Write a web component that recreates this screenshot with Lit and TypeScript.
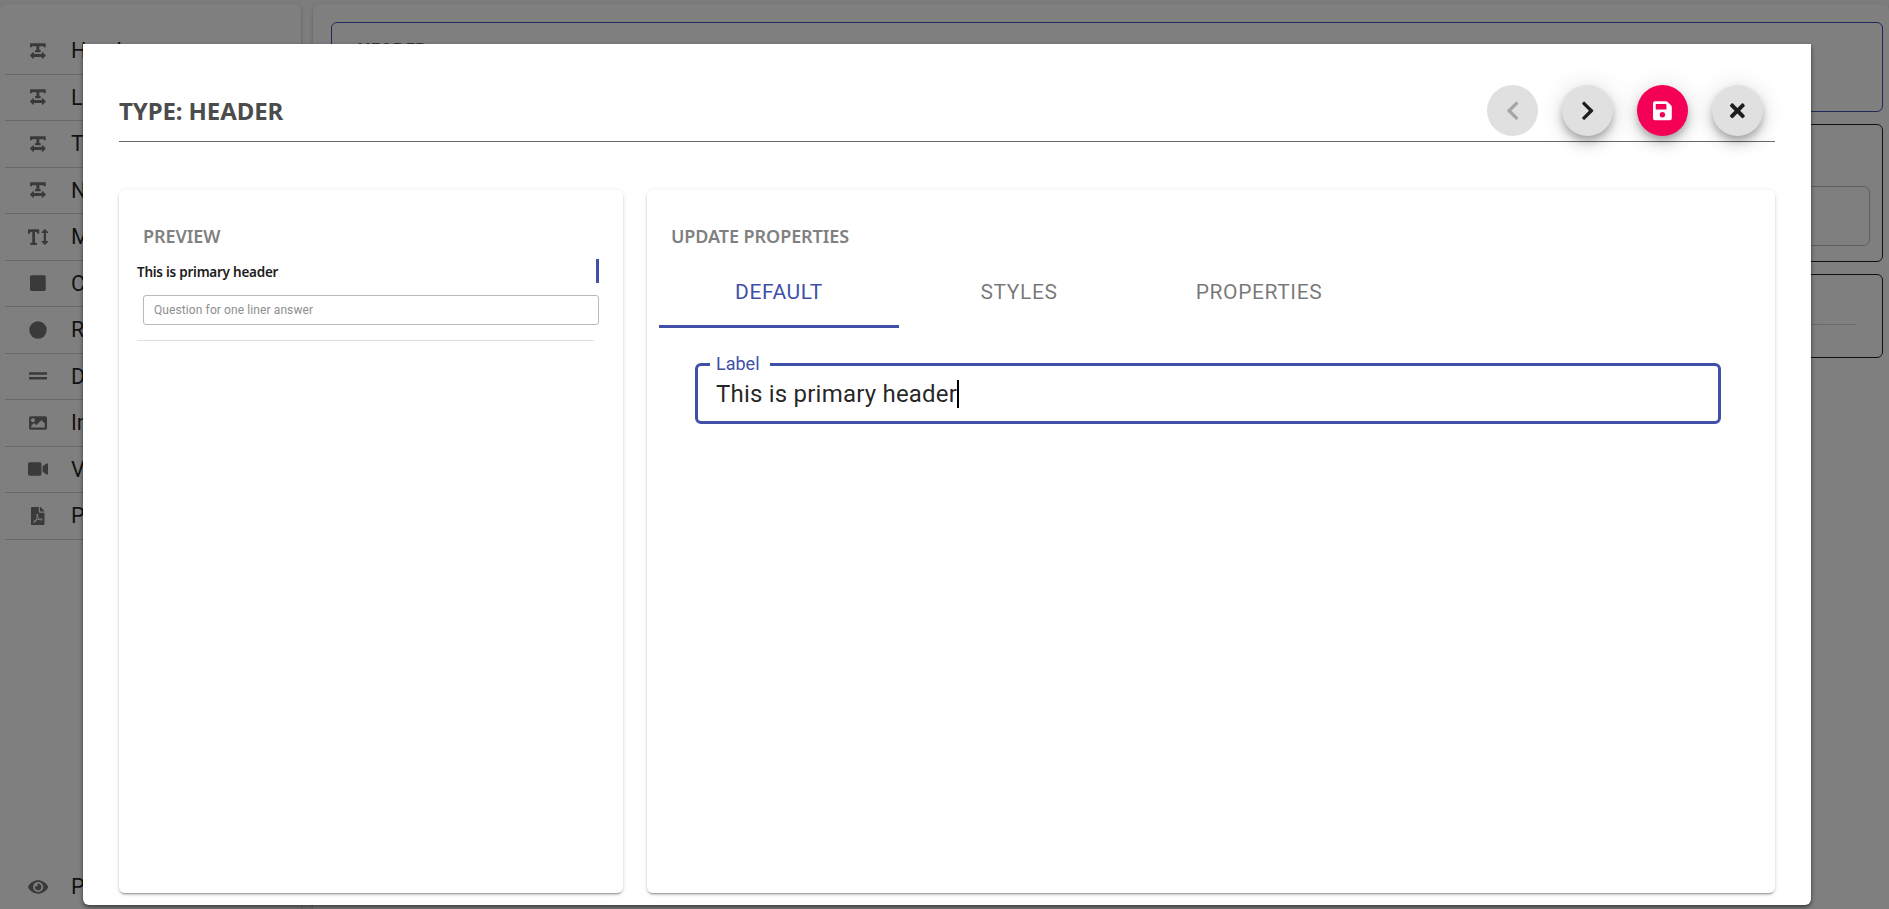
import { LitElement, html, css, svg } from "lit";
import { customElement } from "lit/decorators.js";

const icons: Record<string, unknown> = {
  textWidth: svg`<svg viewBox="0 0 448 512"><path d="M16 32h416a16 16 0 0 1 16 16v88a16 16 0 0 1-16 16h-28a16 16 0 0 1-16-16v-16H266v104h22a16 16 0 0 1 16 16v36a16 16 0 0 1-16 16H160a16 16 0 0 1-16-16v-36a16 16 0 0 1 16-16h22V120H60v16a16 16 0 0 1-16 16H16a16 16 0 0 1-16-16V48a16 16 0 0 1 16-16z"/><path d="M443 373l-80-80c-10-10-27-3-27 11v36H112v-36c0-16-18-20-27-11L5 373a16 16 0 0 0 0 22l80 80c10 10 27 3 27-11v-36h224v36c0 16 18 20 27 11l80-80a16 16 0 0 0 0-22z"/></svg>`,
  textHeight: svg`<svg viewBox="0 0 576 512"><path d="M304 32H16A16 16 0 0 0 0 48v96a16 16 0 0 0 16 16h32a16 16 0 0 0 16-16v-32h56v304H80a16 16 0 0 0-16 16v32a16 16 0 0 0 16 16h160a16 16 0 0 0 16-16v-32a16 16 0 0 0-16-16h-40V112h56v32a16 16 0 0 0 16 16h32a16 16 0 0 0 16-16V48a16 16 0 0 0-16-16zm256 336h-48V144h48c14 0 21-17 11-27l-80-80a16 16 0 0 0-22 0l-80 80c-10 10-3 27 11 27h48v224h-48c-14 0-21 17-11 27l80 80a16 16 0 0 0 22 0l80-80c10-10 3-27-11-27z"/></svg>`,
  square: svg`<svg viewBox="0 0 448 512"><path d="M400 32H48A48 48 0 0 0 0 80v352a48 48 0 0 0 48 48h352a48 48 0 0 0 48-48V80a48 48 0 0 0-48-48z"/></svg>`,
  circle: svg`<svg viewBox="0 0 512 512"><circle cx="256" cy="256" r="248"/></svg>`,
  lines: svg`<svg viewBox="0 0 18 18"><path d="M0 5.300h18v2.400H0zM0 10.100h18v2.400H0z"/></svg>`,
  image: svg`<svg viewBox="0 0 512 512"><path fill-rule="evenodd" d="M464 448H48a48 48 0 0 1-48-48V112a48 48 0 0 1 48-48h416a48 48 0 0 1 48 48v288a48 48 0 0 1-48 48zM112 120a56 56 0 1 0 0 112 56 56 0 0 0 0-112zM64 384h384V272l-87.500-87.500a12 12 0 0 0-17 0L208 320l-55.500-55.500a12 12 0 0 0-17 0L64 336z"/></svg>`,
  video: svg`<svg viewBox="0 0 576 512"><path d="M336 64H48A48 48 0 0 0 0 112v288a48 48 0 0 0 48 48h288a48 48 0 0 0 48-48V112a48 48 0 0 0-48-48zm190 38L416 178v156l110 76c21 14 50-1 50-26V128c0-25-29-40-50-26z"/></svg>`,
  pdf: svg`<svg viewBox="0 0 384 512"><path fill-rule="evenodd" d="M182 250c-5-16-5-47-2-47 9 0 8 41 2 47zm-2 47c-8 20-17 43-28 62 18-7 38-17 62-21-13-10-25-24-34-41zM86 428c0 1 13-5 35-40-7 6-29 25-35 40zM248 160h136v328a24 24 0 0 1-24 24H24a24 24 0 0 1-24-24V24A24 24 0 0 1 24 0h200v136a24 24 0 0 0 24 24zm-8 172c-20-12-33-29-43-54 5-18 12-46 7-64-5-29-42-26-47-7-5 18 0 44 8 77-12 27-28 64-40 85-23 12-54 30-59 53-4 18 30 63 88-37 26-9 55-19 80-23 22 12 47 20 64 20 30 0 33-33 21-44-14-14-54-10-79-6zM377 105L279 7a24 24 0 0 0-17-7h-6v128h128v-6a24 24 0 0 0-7-17zm-74 254c5-3-3-15-52-12 45 20 52 12 52 12z"/></svg>`,
  eye: svg`<svg viewBox="0 0 576 512"><path fill-rule="evenodd" d="M572 241C518 135 410 64 288 64S58 135 3 241a32 32 0 0 0 0 30c55 106 163 177 285 177s230-71 284-177a32 32 0 0 0 0-30zM288 400a144 144 0 1 1 0-288 144 144 0 0 1 0 288z"/><path d="M288 160a95 95 0 0 0-25 4 48 48 0 0 1-67 67 96 96 0 1 0 92-71z"/></svg>`,
  left: svg`<svg viewBox="0 0 320 512"><path d="M34 239L229 45c9-10 24-10 33 0l23 22c9 10 9 25 0 34L131 256l154 155c9 9 9 24 0 34l-23 22c-9 10-24 10-33 0L34 273a24 24 0 0 1 0-34z"/></svg>`,
  right: svg`<svg viewBox="0 0 320 512"><path d="M286 273L91 467c-9 10-24 10-33 0l-23-22c-9-10-9-25 0-34l154-155L35 101c-9-9-9-24 0-34l23-22c9-10 24-10 33 0l195 194a24 24 0 0 1 0 34z"/></svg>`,
  save: svg`<svg viewBox="0 0 448 512"><path fill-rule="evenodd" d="M434 130L350 46a48 48 0 0 0-34-14H48A48 48 0 0 0 0 80v352a48 48 0 0 0 48 48h352a48 48 0 0 0 48-48V164a48 48 0 0 0-14-34zM224 416a64 64 0 1 1 0-128 64 64 0 0 1 0 128zm96-305v101a12 12 0 0 1-12 12H76a12 12 0 0 1-12-12V108a12 12 0 0 1 12-12h228a12 12 0 0 1 9 4l3 3a12 12 0 0 1 4 8z"/></svg>`,
  close: svg`<svg viewBox="0 0 352 512"><path d="M243 256l100-100c12-12 12-32 0-44l-22-23c-12-12-32-12-45 0L176 189 76 89c-12-12-32-12-45 0L9 112c-12 12-12 32 0 44l100 100L9 356c-12 12-12 32 0 45l22 22c13 12 33 12 45 0l100-100 100 100c13 12 33 12 45 0l22-22c12-13 12-33 0-45z"/></svg>`,
};

const tools: [string, string][] = [
  ["textWidth", "Header"],
  ["textWidth", "Label"],
  ["textWidth", "Text"],
  ["textWidth", "Name"],
  ["textHeight", "Multi"],
  ["square", "Check"],
  ["circle", "Radio"],
  ["lines", "Divider"],
  ["image", "Image"],
  ["video", "Video"],
  ["pdf", "PDF"],
];

@customElement("app-root")
export class AppRoot extends LitElement {
  static styles = css`
    :host {
      display: block;
      position: relative;
      width: 100%;
      height: 909px;
      overflow: hidden;
      font-family: Roboto, "Liberation Sans", sans-serif;
      color: rgba(0, 0, 0, 0.87);
    }
    * { box-sizing: border-box; }
    svg { display: block; fill: currentColor; }
    .page {
      display: flex;
      gap: 12px;
      height: 100%;
      padding-top: 4px;
      background: #fafafa;
    }
    .sidebar, .canvas {
      background: #fff;
      border-radius: 6px 6px 0 0;
      box-shadow: 0 3px 2px -3px rgba(0,0,0,.2), 0 2px 3px rgba(0,0,0,.14), 0 1px 5px rgba(0,0,0,.12);
    }
    .sidebar {
      width: 301px;
      display: flex;
      flex-direction: column;
      justify-content: space-between;
      padding: 24px 5px 0;
    }
    .tool {
      display: flex;
      align-items: center;
      height: 46.5px;
      border-bottom: 1.5px solid rgba(0,0,0,.18);
      font-size: 21.6px;
    }
    .tool.last { border: 0; margin-bottom: -1px; }
    .glyph {
      width: 66px;
      display: flex;
      justify-content: center;
      color: rgba(0,0,0,.54);
    }
    .glyph svg { height: 18px; }
    .canvas { flex: 1; padding: 18px 6px 0 18px; }
    .block {
      border: 1px solid #222;
      border-radius: 6px;
      margin-bottom: 12px;
      padding: 14px 12px 0 25px;
      font: 700 18px/25px "Noto Sans", sans-serif;
      letter-spacing: -.3px;
      color: rgba(0,0,0,.6);
    }
    .first { height: 90px; border-color: #3f51b5; }
    .second { height: 138px; padding-top: 61px; }
    .third { height: 84px; padding: 49px 25px 0; }
    .box { height: 60px; border: 1px solid rgba(0,0,0,.25); border-radius: 6px; }
    .rule { height: 1px; background: rgba(0,0,0,.15); }
    .overlay {
      position: absolute;
      inset: 0;
      padding: 44px 78px 4px 83px;
      background: rgba(0,0,0,.5);
    }
    .dialog {
      height: 861px;
      padding: 41px 36px 12px;
      display: flex;
      flex-direction: column;
      background: #fff;
      border-radius: 0 0 6px 6px;
      box-shadow: 0 3px 5px rgba(0,0,0,.35), 0 1px 3px rgba(0,0,0,.3);
    }
    .head {
      display: flex;
      justify-content: space-between;
      height: 57px;
      padding-right: 12px;
      margin-bottom: 48px;
      border-bottom: 1px solid #686868;
    }
    .title {
      font: 700 24px/51px "Noto Sans", sans-serif;
      letter-spacing: -.1px;
      color: #4c4c4c;
    }
    .actions { display: flex; gap: 24px; }
    .fab {
      width: 51px;
      height: 51px;
      border: 0;
      padding: 0;
      border-radius: 50%;
      display: flex;
      align-items: center;
      justify-content: center;
      background: #e0e0e0;
      color: rgba(0,0,0,.87);
      box-shadow: 0 4.500px 7px -1px rgba(0,0,0,.22), 0 8px 14px rgba(0,0,0,.15), 0 1px 26px rgba(0,0,0,.12);
    }
    .fab svg { height: 21.500px; }
    .fab.off { box-shadow: none; color: rgba(0,0,0,.26); }
    .fab.pink { background: #f50057; color: #fff; }
    .panels { flex: 1; display: flex; gap: 24px; }
    .panel {
      border-radius: 6px;
      background: #fff;
      box-shadow: 0 3px 1px -2px rgba(0,0,0,.2), 0 2px 2px rgba(0,0,0,.14), 0 1px 5px rgba(0,0,0,.12);
    }
    .preview { width: 504px; padding: 33px 24px 0 18px; }
    .update { flex: 1; padding: 33px 54px 0 12px; }
    .subtitle {
      font: 600 18px/26px "Noto Sans", sans-serif;
      letter-spacing: -.08px;
      color: #808080;
      padding-left: 6px;
    }
    .update .subtitle { padding-left: 12px; }
    .line {
      display: flex;
      justify-content: space-between;
      height: 24px;
      margin-top: 10px;
      border-right: 3px solid #4050a8;
      font: 600 13.500px/27px "Noto Sans", sans-serif;
      letter-spacing: -.25px;
      color: #1c1c1c;
    }
    .answer {
      height: 30px;
      margin: 12px 0 15px 6px;
      padding-left: 10px;
      border: 1px solid #b9b9b9;
      border-radius: 3px;
      font-size: 12px;
      line-height: 28px;
      letter-spacing: .1px;
      color: #8e8e8e;
    }
    .preview .rule { margin-right: 5px; background: #e0e0e0; }
    .tabs { display: flex; margin-top: 7px; }
    .tab {
      width: 240px;
      height: 72px;
      padding-top: 2px;
      display: flex;
      align-items: center;
      justify-content: center;
      border-bottom: 3px solid transparent;
      font-size: 21px;
      letter-spacing: .6px;
      color: rgba(0,0,0,.54);
    }
    .tab.on { color: #4050a8; border-color: #4050a8; }
    .field {
      min-width: 0;
      height: 70px;
      margin: 26px 0 0 36px;
      padding: 0 17px 0 15px;
      border: 3px solid #4050a8;
      border-radius: 6px;
    }
    .legend {
      height: 20px;
      padding: 0 10px 0 6px;
      margin-left: -3px;
      font-size: 18px;
      line-height: 20px;
      color: #4050a8;
    }
    .value {
      display: flex;
      align-items: center;
      height: 28px;
      margin: 6px 0 0 3px;
      font-size: 24px;
      letter-spacing: .21px;
    }
    .caret { width: 2px; height: 28px; background: #000; }
  `;

  render() {
    return html`
      <div class="page">
        <nav class="sidebar">
          <div>${tools.map(([i, n]) => this.tool(i, n))}</div>
          ${this.tool("eye", "Preview", "last")}
        </nav>
        <main class="canvas">
          <div class="block first">HEADER</div>
          <div class="block second"><div class="box"></div></div>
          <div class="block third"><div class="rule"></div></div>
        </main>
      </div>
      <div class="overlay">
        <section class="dialog">
          <header class="head">
            <div class="title">TYPE: HEADER</div>
            <div class="actions">
              <button class="fab off">${icons.left}</button>
              <button class="fab">${icons.right}</button>
              <button class="fab pink">${icons.save}</button>
              <button class="fab">${icons.close}</button>
            </div>
          </header>
          <div class="panels">
            <div class="panel preview">
              <div class="subtitle">PREVIEW</div>
              <div class="line">This is primary header</div>
              <div class="answer">Question for one liner answer</div>
              <div class="rule"></div>
            </div>
            <div class="panel update">
              <div class="subtitle">UPDATE PROPERTIES</div>
              <div class="tabs">
                <div class="tab on">DEFAULT</div>
                <div class="tab">STYLES</div>
                <div class="tab">PROPERTIES</div>
              </div>
              <fieldset class="field">
                <legend class="legend">Label</legend>
                <div class="value"><span>This is primary header</span><i class="caret"></i></div>
              </fieldset>
            </div>
          </div>
        </section>
      </div>
    `;
  }

  private tool(icon: string, name: string, extra = "") {
    return html`<div class="tool ${extra}"><span class="glyph">${icons[icon]}</span><span class="name">${name}</span></div>`;
  }
}
